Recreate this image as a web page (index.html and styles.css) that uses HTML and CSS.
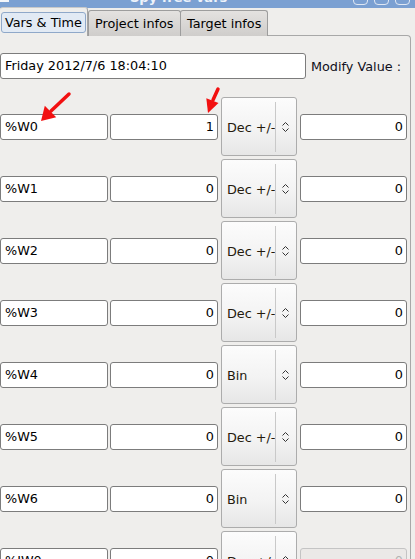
FILE: index.html
```html
<!DOCTYPE html>
<html>
<head>
<meta charset="utf-8">
<link rel="stylesheet" href="styles.css">
</head>
<body>
<div class="titlebar">
  <span class="tb-left"></span>
  <span class="title">Spy free vars</span>
  <div class="wm-buttons"><span class="wm-btn"></span><span class="wm-btn"></span><span class="wm-btn"></span></div>
</div>
<div class="tabs">
  <div class="tab active"><span class="focus">Vars &amp; Time</span></div>
  <div class="tab">Project infos</div>
  <div class="tab">Target infos</div>
</div>
<div class="panel">
  <div class="top-row">
    <div class="field date">Friday 2012/7/6 18:04:10</div>
    <span class="modify">Modify Value :</span>
  </div>
  <div class="rows">
    <div class="row">
      <div class="field">%W0</div><div class="field num">1</div>
      <div class="combo"><span class="combo-text">Dec +/-</span><span class="combo-arrow"><svg width="7" height="12" viewBox="0 0 7 12"><path d="M0.5 4.5 L3.5 1.5 L6.5 4.5 M0.5 7.5 L3.5 10.5 L6.5 7.5" fill="none" stroke="#333" stroke-width="1"/></svg></span></div>
      <div class="field num">0</div>
    </div>
    <div class="row">
      <div class="field">%W1</div><div class="field num">0</div>
      <div class="combo"><span class="combo-text">Dec +/-</span><span class="combo-arrow"><svg width="7" height="12" viewBox="0 0 7 12"><path d="M0.5 4.5 L3.5 1.5 L6.5 4.5 M0.5 7.5 L3.5 10.5 L6.5 7.5" fill="none" stroke="#333" stroke-width="1"/></svg></span></div>
      <div class="field num">0</div>
    </div>
    <div class="row">
      <div class="field">%W2</div><div class="field num">0</div>
      <div class="combo"><span class="combo-text">Dec +/-</span><span class="combo-arrow"><svg width="7" height="12" viewBox="0 0 7 12"><path d="M0.5 4.5 L3.5 1.5 L6.5 4.5 M0.5 7.5 L3.5 10.5 L6.5 7.5" fill="none" stroke="#333" stroke-width="1"/></svg></span></div>
      <div class="field num">0</div>
    </div>
    <div class="row">
      <div class="field">%W3</div><div class="field num">0</div>
      <div class="combo"><span class="combo-text">Dec +/-</span><span class="combo-arrow"><svg width="7" height="12" viewBox="0 0 7 12"><path d="M0.5 4.5 L3.5 1.5 L6.5 4.5 M0.5 7.5 L3.5 10.5 L6.5 7.5" fill="none" stroke="#333" stroke-width="1"/></svg></span></div>
      <div class="field num">0</div>
    </div>
    <div class="row">
      <div class="field">%W4</div><div class="field num">0</div>
      <div class="combo"><span class="combo-text">Bin</span><span class="combo-arrow"><svg width="7" height="12" viewBox="0 0 7 12"><path d="M0.5 4.5 L3.5 1.5 L6.5 4.5 M0.5 7.5 L3.5 10.5 L6.5 7.5" fill="none" stroke="#333" stroke-width="1"/></svg></span></div>
      <div class="field num">0</div>
    </div>
    <div class="row">
      <div class="field">%W5</div><div class="field num">0</div>
      <div class="combo"><span class="combo-text">Dec +/-</span><span class="combo-arrow"><svg width="7" height="12" viewBox="0 0 7 12"><path d="M0.5 4.5 L3.5 1.5 L6.5 4.5 M0.5 7.5 L3.5 10.5 L6.5 7.5" fill="none" stroke="#333" stroke-width="1"/></svg></span></div>
      <div class="field num">0</div>
    </div>
    <div class="row">
      <div class="field">%W6</div><div class="field num">0</div>
      <div class="combo"><span class="combo-text">Bin</span><span class="combo-arrow"><svg width="7" height="12" viewBox="0 0 7 12"><path d="M0.5 4.5 L3.5 1.5 L6.5 4.5 M0.5 7.5 L3.5 10.5 L6.5 7.5" fill="none" stroke="#333" stroke-width="1"/></svg></span></div>
      <div class="field num">0</div>
    </div>
    <div class="row">
      <div class="field">%IW0</div><div class="field num">0</div>
      <div class="combo"><span class="combo-text">Dec +/-</span><span class="combo-arrow"><svg width="7" height="12" viewBox="0 0 7 12"><path d="M0.5 4.5 L3.5 1.5 L6.5 4.5 M0.5 7.5 L3.5 10.5 L6.5 7.5" fill="none" stroke="#333" stroke-width="1"/></svg></span></div>
      <div class="field num disabled">0</div>
    </div>
  </div>
</div>
<svg class="annot" width="415" height="559" viewBox="0 0 415 559">
  <line x1="69" y1="94" x2="51" y2="111" stroke="#f21010" stroke-width="3.5" stroke-linecap="round"/>
  <polygon points="41,121 44.8,105.8 56.2,117.2" fill="#f21010"/>
  <line x1="218" y1="89" x2="213" y2="100" stroke="#f21010" stroke-width="3.5" stroke-linecap="round"/>
  <polygon points="208,113 206.3,98.3 218.5,103" fill="#f21010"/>
</svg>
</body>
</html>
```
FILE: styles.css
```css
html, body {
  margin: 0;
  padding: 0;
}
body {
  width: 415px;
  height: 559px;
  overflow: hidden;
  position: relative;
  background: #efeeec;
  font-family: "DejaVu Sans", "Noto Sans", sans-serif;
  font-size: 12.8px;
  color: #000;
}

/* title bar */
.titlebar {
  height: 8px;
  background: #7ba0d2;
  display: flex;
  align-items: flex-start;
  overflow: hidden;
}
.tb-left {
  width: 9px;
  height: 2px;
  background: #f4f6fa;
  flex: none;
}
.title {
  margin-left: 121px;
  margin-top: -9px;
  font-weight: bold;
  font-size: 13px;
  line-height: 14px;
  color: #eef3fb;
  white-space: nowrap;
}
.wm-buttons {
  margin-left: auto;
  margin-right: 5px;
  margin-top: -7px;
  display: flex;
  gap: 6px;
}
.wm-btn {
  width: 15px;
  height: 12px;
  border: 1px solid #dfe7f3;
  border-radius: 4px;
  box-sizing: border-box;
}

/* tabs */
.tabs {
  height: 28px;
  display: flex;
  align-items: flex-end;
  margin-bottom: -1px;
}
.tab {
  box-sizing: border-box;
  height: 26px;
  padding: 5px 0 0 6px;
  border: 1px solid #9d9d9d;
  border-bottom: none;
  border-radius: 3px 3px 0 0;
  background: linear-gradient(#e4e2e0, #cfcdcb);
  white-space: nowrap;
  line-height: 15px;
}
.tab:nth-child(2) { width: 93px; }
.tab:nth-child(3) { width: 88px; margin-left: -1px; }
.tab.active {
  width: 88px;
  height: 29px;
  padding: 4px 2px 0 1px;
  border: none;
  border-right: 1px solid #a5a5a5;
  border-top: 1px solid #c9c9c9;
  background: #efeeec;
  position: relative;
  z-index: 1;
}
.focus {
  display: block;
  box-sizing: border-box;
  width: 85px;
  height: 21px;
  padding: 2px 0 0 3px;
  background: #e2eaf4;
  border: 1px solid #8fa8c9;
  border-radius: 3px;
  line-height: 15px;
}

/* panel */
.panel {
  box-sizing: border-box;
  width: 411px;
  height: 600px;
  border-top: 1px solid #a8a8a8;
  border-right: 1px solid #a8a8a8;
  border-top-right-radius: 4px;
  padding-top: 17px;
}
.top-row {
  display: flex;
  align-items: center;
  height: 26px;
}
.field {
  box-sizing: border-box;
  height: 26px;
  background: #fff;
  border: 1px solid #7c7c7c;
  border-radius: 3px;
  padding: 0 3px 0 4px;
  line-height: 24px;
  white-space: nowrap;
  overflow: hidden;
}
.date {
  width: 306px;
}
.modify {
  margin-left: 5px;
  color: #101020;
  white-space: nowrap;
}
.rows {
  margin-top: 18px;
  display: flex;
  flex-direction: column;
  gap: 3px;
}
.row {
  height: 59px;
  display: grid;
  grid-template-columns: 108px 108px 77px 108px;
  column-gap: 2px;
  align-items: center;
}
.row > .combo { margin-left: 1px; }
.row > .field:last-child { margin-left: 1px; }
.num {
  text-align: right;
}
.disabled {
  background: #ebe9e7;
  border-color: #c4c4c4;
  color: #b4b4b4;
}

/* combo */
.combo {
  box-sizing: border-box;
  height: 59px;
  width: 76px;
  border: 1px solid #acacac;
  border-radius: 3px;
  background: linear-gradient(#fcfcfc, #f3f3f3 55%, #e6e6e6);
  display: flex;
  align-items: center;
}
.combo-text {
  width: 54px;
  padding-left: 5px;
  box-sizing: border-box;
  white-space: nowrap;
  overflow: hidden;
  color: #241a0c;
  align-self: stretch;
  display: flex;
  align-items: center;
  border-right: 1px solid #c9c9c9;
  margin: 4px 0 3px;
}
.combo-arrow {
  flex: 1;
  display: flex;
  justify-content: center;
  align-items: center;
  padding-right: 1px;
}
.combo-arrow svg { display: block; }

/* annotations drawn over the screenshot */
.annot {
  position: absolute;
  left: 0;
  top: 0;
  pointer-events: none;
  z-index: 5;
}
```
